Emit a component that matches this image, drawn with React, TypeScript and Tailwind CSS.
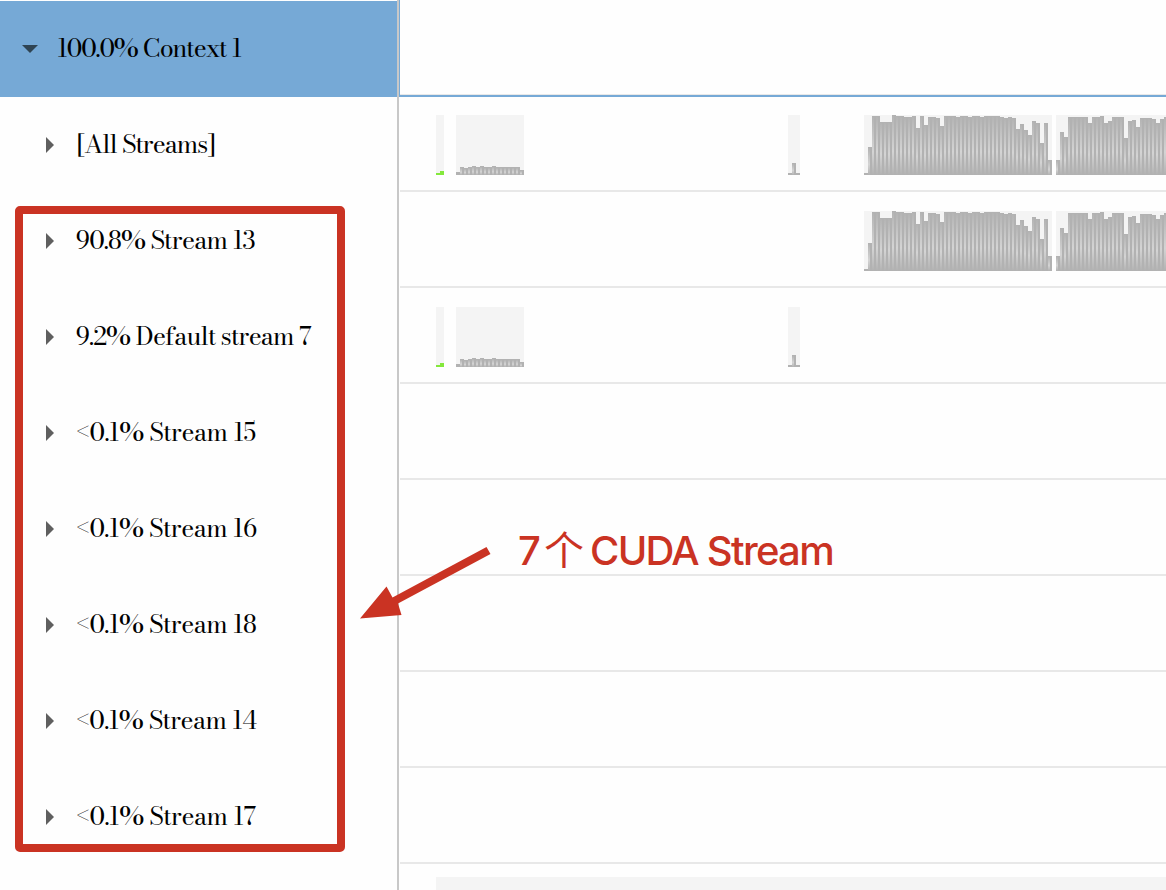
type Bars = { x: number; color?: string; tops: number[] }

// bar tops are measured down from the top of the 60px track, bars are 4px wide
const green: Bars = { x: 436, color: 'green', tops: [58, 56] }
const small: Bars = {
  x: 456,
  tops: [57, 52, 53, 52, 51, 52, 51, 52, 52, 51, 52, 52, 52, 52, 52, 52, 55],
}
const spike: Bars = { x: 788, tops: [58, 48, 58] }
const first: Bars = {
  x: 864,
  tops: [
    58, 32, 1, 1, 7, 7, 7, 0, 1, 1, 2, 2, 1, 13, 1, 10, 2, 2, 3, 11, 1, 1, 1, 2, 1, 1, 2, 1, 1, 2, 1,
    1, 1, 1, 2, 3, 2, 3, 14, 9, 15, 20, 6, 8, 28, 8, 45,
  ],
}
const second: Bars = {
  x: 1056,
  tops: [45, 17, 22, 2, 2, 2, 2, 2, 8, 2, 2, 1, 8, 6, 2, 2, 2, 23, 6, 5, 12, 3, 3, 3, 4, 8, 4, 2],
}

const rows: { label: string; tracking: string; bars: Bars[] }[] = [
  { label: '[All Streams]', tracking: 'ml-[23px] tracking-[-1.05px]', bars: [green, small, spike, first, second] },
  { label: '90.8% Stream 13', tracking: 'ml-[22px] tracking-[-0.82px]', bars: [first, second] },
  { label: '9.2% Default stream 7', tracking: 'ml-[22px] tracking-[-0.87px]', bars: [green, small, spike] },
  { label: '<0.1% Stream 15', tracking: 'ml-[22px] tracking-[-0.55px]', bars: [] },
  { label: '<0.1% Stream 16', tracking: 'ml-[22px] tracking-[-0.58px]', bars: [] },
  { label: '<0.1% Stream 18', tracking: 'ml-[22px] tracking-[-0.58px]', bars: [] },
  { label: '<0.1% Stream 14', tracking: 'ml-[22px] tracking-[-0.65px]', bars: [] },
  { label: '<0.1% Stream 17', tracking: 'ml-[22px] tracking-[-0.55px]', bars: [] },
]

const labelFont = "font-['Bodoni_Moda','Liberation_Serif',serif] font-[450] [font-kerning:none]"

function Histogram({ bars }: { bars: Bars[] }) {
  return (
    <svg width="766" height="60" viewBox="400 0 766 60" shapeRendering="crispEdges" className="block">
      <defs>
        <linearGradient id="shine" x1="0" y1="0" x2="0" y2="1">
          <stop offset="0" stopColor="#b4b4b4" />
          <stop offset="0.6" stopColor="#d4d4d4" />
          <stop offset="1" stopColor="#b2b2b2" />
        </linearGradient>
      </defs>
      {bars.map(({ x, color, tops }) => (
        <g key={x}>
          <rect x={x} y="0" width={tops.length * 4} height="60" fill="#f4f4f4" />
          {tops.map((top, i) => (
            <g key={i}>
              <rect x={x + i * 4} y={top} width="4" height={60 - top} fill={color ? '#84e83c' : '#b2b2b2'} />
              {!color && top < 57 && (
                <rect x={x + i * 4} y={top + 1} width="2" height={59 - top} fill="url(#shine)" />
              )}
            </g>
          ))}
        </g>
      ))}
    </svg>
  )
}

function Caret({ open }: { open?: boolean }) {
  return open ? (
    <svg width="16" height="8" viewBox="0 0 16 8" className="shrink-0">
      <path d="M0 0H16L8 8Z" fill="#2f4453" />
    </svg>
  ) : (
    <svg width="8" height="16" viewBox="0 0 8 16" className="shrink-0">
      <path d="M0 0L8 8L0 16Z" fill="#5f5f5f" />
    </svg>
  )
}

export default function App() {
  return (
    <div className="relative flex h-[890px] w-[1166px] overflow-hidden bg-[#fefefe] text-black">
      <aside className="w-[397px] shrink-0 pt-px">
        <div className="flex h-24 items-center bg-[#76a9d6] pl-[22px]">
          <Caret open />
          <span className={`ml-[19px] whitespace-pre text-[25px] tracking-[-1.1px] ${labelFont}`}>
            100.0% Context 1
          </span>
        </div>
        {rows.map(({ label, tracking }) => (
          <div key={label} className="flex h-24 items-center pl-[46px]">
            <Caret />
            <span className={`whitespace-pre text-[25px] ${tracking} ${labelFont}`}>{label}</span>
          </div>
        ))}
      </aside>

      <div className="w-0.5 shrink-0 bg-[#c8c8c8]" />

      <main className="flex-1">
        <div className="h-[97px] border-b-2 border-l border-b-[#76a9d6] border-l-[#76a9d6]">
          <div className="h-[95px] border-b border-[#e8e8e8]" />
        </div>
        {rows.map(({ label, bars }, i) => (
          <div
            key={label}
            className={`ml-px border-b-2 border-[#e8e8e8] ${i === 0 ? 'h-[95px] pt-[18px]' : 'h-24 pt-[19px]'}`}
          >
            <Histogram bars={bars} />
          </div>
        ))}
        <div className="ml-[37px] mt-[13px] h-[13px] bg-[#f4f4f4]" />
      </main>

      <div className="absolute left-[15px] top-[206px] h-[646px] w-[330px] rounded-[5px] border-8 border-[#ca3323]" />

      <svg width="140" height="80" viewBox="355 543 140 80" className="absolute left-[355px] top-[543px]">
        <path
          d="M486.5 547L490.5 554L398 603.5L401.5 615L360 618.5L386.5 586.5L392.5 597.5Z"
          fill="#ca3323"
        />
      </svg>

      <div className="absolute left-[518px] top-[526px] flex items-center font-['Inter','Noto_Sans_CJK_SC',sans-serif] text-[40px] leading-[50px] text-[#ca3323]">
        <span className="w-[26px] font-[450]">7</span>
        <span className="w-[46px]">个</span>
        <span className="whitespace-pre font-[450] tracking-[-1.7px]">CUDA Stream</span>
      </div>
    </div>
  )
}
